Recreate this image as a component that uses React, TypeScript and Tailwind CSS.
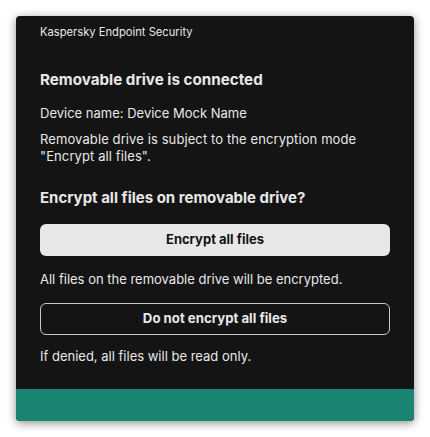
import React from "react";

export default function App() {
  return (
    <div className="w-[430px] h-[437px] bg-white pt-4 pl-4" style={{ fontFamily: "Inter, 'Noto Sans', sans-serif" }}>
      <div className="w-[398px] h-[405px] rounded-[4px] bg-[#141414] shadow-[0_2px_10px_rgba(0,0,0,0.45)] flex flex-col overflow-hidden">
        <div className="flex-1 px-6 text-[#e8e8e8]">
          <div className="pt-[9px] text-[11.2px] leading-[14px]">Kaspersky Endpoint Security</div>
          <div className="mt-[31px] text-[15.2px] font-bold leading-[20px]">Removable drive is connected</div>
          <div className="mt-[15px] text-[13px] leading-[17px]">Device name: Device Mock Name</div>
          <div className="mt-[9px] text-[13px] tracking-[0.1px] leading-[17px]">
            Removable drive is subject to the encryption mode
            <br />
            "Encrypt all files".
          </div>
          <div className="mt-[23px] text-[15px] font-bold leading-[20px]">Encrypt all files on removable drive?</div>
          <button className="mt-[16px] w-full h-[32px] rounded-[6px] bg-[#e8e8e8] text-[#141414] text-[13px] font-bold">Encrypt all files</button>
          <div className="mt-[15px] text-[13px] leading-[17px]">All files on the removable drive will be encrypted.</div>
          <button className="mt-[15px] w-full h-[32px] rounded-[6px] border border-[#c8c8c8] text-[#e8e8e8] text-[13.2px] font-bold">Do not encrypt all files</button>
          <div className="mt-[13px] text-[13px] leading-[17px]">If denied, all files will be read only.</div>
        </div>
        <div className="h-[32px] bg-[#1a8472]" />
      </div>
    </div>
  );
}
